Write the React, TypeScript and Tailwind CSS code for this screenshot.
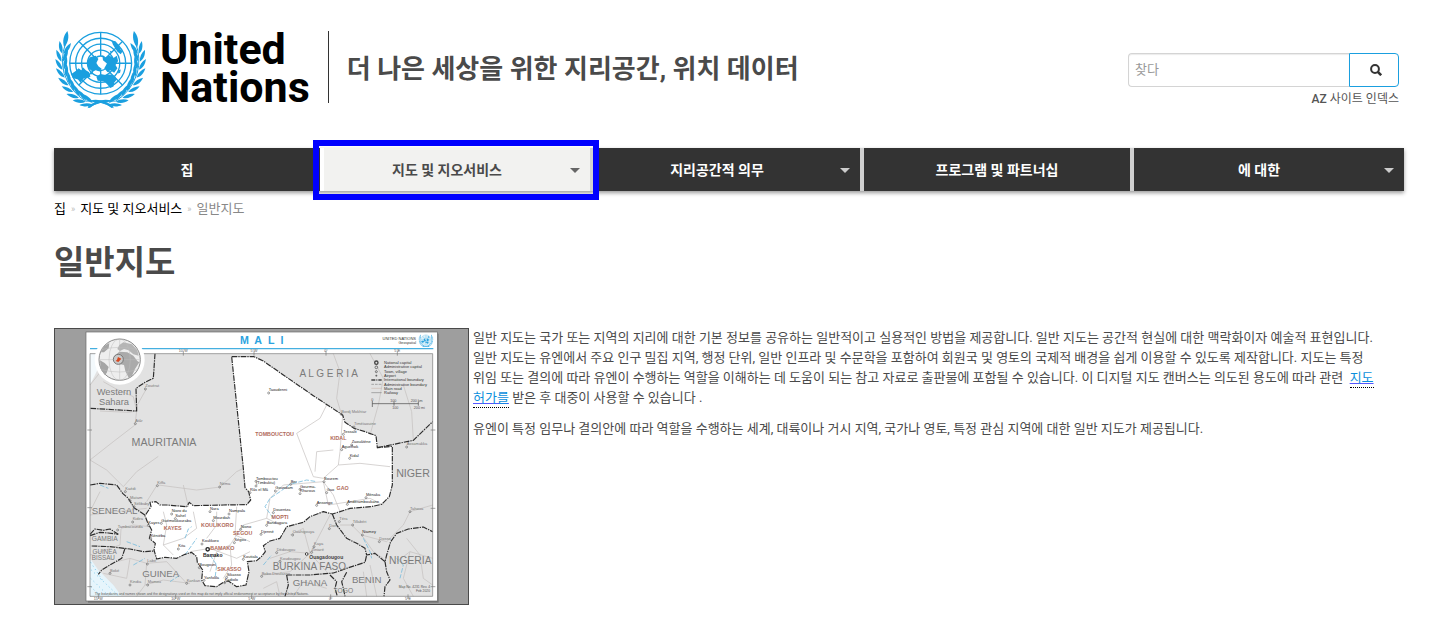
const NAV_ITEMS = [
  { label: '집', menu: false, active: false },
  { label: '지도 및 지오서비스', menu: true, active: true },
  { label: '지리공간적 의무', menu: true, active: false },
  { label: '프로그램 및 파트너십', menu: false, active: false },
  { label: '에 대한', menu: true, active: false },
];

// x, y and heading of each pair of leaves along the left branch
const LEAVES = [
  [128, 238, -74],
  [108, 230, -64],
  [88, 218, -54],
  [71, 201, -44],
  [57, 181, -34],
  [46, 158, -24],
  [39, 134, -14],
  [36, 110, -4],
  [38, 86, 8],
];

function Wreath() {
  return (
    <g>
      <path d="M192 250 Q150 226 108 230 Q62 204 42 146 Q30 100 46 56" fill="none" stroke="currentColor" strokeWidth="3" />
      <path d="M186 251 Q164 232 134 234 L120 228 Q160 220 192 247Z" />
      {LEAVES.map(([x, y, a]) => (
        <g key={y} transform={`translate(${x} ${y}) rotate(${a})`}>
          <path d="M-2 0C-14 -9 -17 -22 -15 -37C-5 -27 0 -14 -2 0Z" />
          <path d="M3 0C15 -9 20 -20 20 -36C9 -28 1 -14 3 0Z" />
        </g>
      ))}
      <path d="M42 66C36 48 40 30 52 17C58 34 54 54 42 66Z" />
    </g>
  );
}

function Emblem(props: React.SVGProps<SVGSVGElement>) {
  return (
    <svg viewBox="12 14 284 240" fill="currentColor" aria-hidden="true" {...props}>
      <Wreath />
      <g transform="translate(306 0) scale(-1 1)">
        <Wreath />
      </g>
      <circle cx="153" cy="115" r="100" fill="#fff" />
      <g fill="none" stroke="currentColor" strokeWidth="4">
        <circle cx="153" cy="115" r="94" />
        <circle cx="153" cy="115" r="76" />
        <circle cx="153" cy="115" r="58" />
        <circle cx="153" cy="115" r="40" />
        <circle cx="153" cy="115" r="22" />
        <path d="M153 21V93M153 137V209M59 115H131M175 115H247M87 49L137 99M169 131L219 181M219 49L169 99M137 131L87 181" />
      </g>
      <path d="M114 104 122 96 138 92 146 102 140 114 146 124 156 132 150 140 138 136 128 140 116 130 110 116Z" />
      <path d="M158 90 166 99 178 91 192 99 202 92 206 108 198 120 204 130 194 144 182 136 174 142 164 130 172 116 160 106Z" />
      <path d="M64 148 78 138 86 130 94 136 100 128 108 136 118 142 122 156 110 158 100 162 92 174 84 164 68 160Z" />
      <path d="M140 156 152 148 168 151 182 149 196 154 202 164 194 174 192 186 182 190 172 178 162 170 144 168Z" />
      <path d="M186 46 198 48 208 60 214 74 220 78 214 88 204 80 196 68 190 58Z" />
      <path d="M206 136 214 134 212 144 206 146ZM120 140 130 142 126 150ZM180 76 188 80 184 84Z" />
    </svg>
  );
}

const MALI =
  'M545 95H612L640 108 700 150 790 212 878 270 885 292 912 310 945 320 978 332 982 368 1027 364V480L1018 515 995 538 963 545 900 550 870 560 847 567 820 560 780 575 760 592 710 605 690 640 660 648 640 662 646 680 634 695 620 707 592 710 597 740 588 780 560 785 535 768 520 772 500 785 465 782 455 765 458 735 442 712 440 695 425 682 405 688 380 700 345 697 320 702 312 675 316 655 298 640 305 615 292 590 285 572 303 545 300 532 318 530 330 540 350 540 410 545 418 532 430 542 520 540 590 539 602 525 596 500 585 488 580 430Z';

const BORDERS = [
  'M315 86 310 160 285 172 258 190 260 258 120 250',
  'M120 480 150 475 200 480 218 505 235 520 252 548 285 570',
  'M120 628 135 612 160 616 180 612 205 628M120 632 150 622 175 624 205 628',
  'M125 663 180 665 240 672 280 680 312 678',
  'M225 670 215 700 180 720 155 735 145 748',
  'M710 750 780 750 850 744 890 730 945 712 950 690',
  'M847 567 860 600 890 640 920 655 945 670 950 690 975 685 1005 710 1010 690 1022 650 1040 625 1075 612 1120 606 1148 620',
  'M1005 710 1010 740 1020 765 1005 785 1002 814',
  'M710 750 715 780 705 814',
  'M840 750 860 770 855 790 862 814M890 742 875 770 880 790 885 814',
  'M982 368 1090 346 1148 290',
];

const ROADS = [
  'M120 180 160 130M160 170 195 190 250 215 260 258 235 262 150 258M290 190 262 240 255 300 190 350 120 405M120 405 170 435 220 485 260 440 325 394',
  'M120 570 200 560 290 550M150 500 120 560M213 610 250 600 300 605M120 690 210 660 213 612',
  'M325 480 440 495 510 486M400 480 415 545M320 482 290 530M510 486 560 440 580 430',
  'M200 710 240 700 290 715 350 710 410 775M290 715 285 780 260 814M240 700 230 760 160 745M285 780 340 765 420 775',
  'M850 86 870 140 860 220 875 270M960 86 1000 160 985 240 960 330M1090 346 1085 260 1060 180',
  'M878 270 870 380 865 420 820 460 790 455 740 325 810 280 830 240',
  'M865 420 930 415 1020 425M795 440 800 380 850 375',
  'M700 480 760 475 820 470 850 510 870 560M820 470 835 540 900 530 960 520 1000 540',
  'M700 480 660 520 650 580 690 600M650 580 580 600 540 660 500 680 480 740',
  'M340 560 350 600 340 660 400 640 440 610 430 560M340 660 370 690M420 680 480 670 560 700 600 680',
  'M500 560 500 600 470 640M560 545 555 630 600 650M540 660 545 720 520 760',
  'M660 700 720 680 780 685 840 570M780 685 760 610 720 630M780 685 830 740M640 750 720 740 780 685',
  'M870 600 905 600 935 630 1010 650 1060 600 1080 560 1148 540M935 630 970 680 1000 700',
  'M1040 710 1080 680 1148 700M1080 680 1060 760 1090 814M940 740 950 814M960 720 980 814',
  'M730 814 760 770 830 790M640 790 680 770 690 814M1070 640 1110 690 1120 760 1148 780',
];

const RIVERS = [
  'M405 640 415 612 425 605M405 690 440 640M480 690 500 720 495 760',
  'M670 580 645 545 660 520 690 500 720 478 770 465 800 470',
  'M940 640 960 680 965 700M230 650 270 665M360 770 390 750M150 480 175 490M250 720 285 700M1040 700 1060 720 1050 760M640 720 665 690',
];

const COUNTRIES: [string, number, number, number][] = [
  ['Western', 192, 209, 28],
  ['Sahara', 192, 240, 28],
  ['MAURITANIA', 342, 364, 32],
  ['A L G E R I A', 836, 157, 30],
  ['SENEGAL', 194, 568, 29],
  ['GAMBIA', 164, 648, 20],
  ['GUINEA', 164, 687, 19],
  ['BISSAU', 160, 706, 19],
  ['GUINEA', 332, 755, 29],
  ['NIGER', 1089, 455, 32],
  ['NIGERIA', 1081, 717, 31],
  ['BURKINA FASO', 778, 735, 30],
  ['GHANA', 780, 784, 29],
  ['BENIN', 950, 774, 29],
  ['TOGO', 880, 804, 20],
];

const REGIONS: [string, number, number][] = [
  ['TOMBOUCTOU', 674, 334],
  ['KIDAL', 865, 346],
  ['GAO', 878, 495],
  ['MOPTI', 690, 581],
  ['KAYES', 368, 614],
  ['KOULIKORO', 502, 606],
  ['SEGOU', 578, 629],
  ['BAMAKO', 517, 676],
  ['SIKASSO', 538, 737],
];

const TOWNS: [string, number, number, boolean][] = [
  ['Zouérat', 286, 192, false],
  ['Atâr', 256, 296, false],
  ['Kiffa', 322, 482, false],
  ['Néma', 509, 486, false],
  ['Kaédi', 226, 500, false],
  ['Matam', 240, 527, false],
  ['Sélibaby', 252, 545, false],
  ['Kidira', 248, 591, false],
  ['Tambacounda', 203, 615, false],
  ['Kayes', 295, 601, true],
  ['Kéniéba', 302, 640, true],
  ['Nioro du', 365, 567, true],
  ['Sahel', 376, 581, true],
  ['Guémoukouraba', 334, 595, true],
  ['Kita', 385, 672, true],
  ['Nara', 480, 560, true],
  ['Mourdiah', 490, 587, true],
  ['Nampala', 537, 567, true],
  ['Niono', 572, 613, true],
  ['Ségou', 553, 653, true],
  ['Koulikoro', 456, 657, true],
  ['Bougouni', 448, 728, true],
  ['Sikasso', 530, 757, true],
  ['Koutiala', 580, 703, true],
  ['Yanfolila', 462, 766, true],
  ['Kadiolo', 524, 773, true],
  ['Taoudenni', 656, 204, true],
  ['Tessalit', 880, 328, true],
  ['Bordj Mokhtar', 874, 268, false],
  ['Timéïaouine', 912, 306, false],
  ['Zaouâtène', 905, 360, true],
  ['Aguelhok', 875, 374, true],
  ['Kidal', 899, 400, true],
  ['Assamakka', 1070, 366, false],
  ['Tombouctou', 618, 469, true],
  ['(Timbuktu)', 618, 483, true],
  ['Goundam', 676, 498, true],
  ['Râs el Mâ', 600, 503, true],
  ['Ber', 722, 478, true],
  ['Gourma-', 750, 493, true],
  ['Rharous', 750, 506, true],
  ['Bourem', 822, 470, true],
  ['Gao', 830, 503, true],
  ['Ansongo', 800, 541, true],
  ['Ménaka', 948, 518, true],
  ['Andéramboukane', 892, 538, true],
  ['Douentza', 670, 563, true],
  ['Bandiagara', 650, 601, true],
  ['Djenné', 633, 628, true],
  ['Ouahigouya', 728, 630, false],
  ['Dédougou', 680, 683, false],
  ['Koudougou', 690, 709, false],
  ['Bobo-Dioulasso', 635, 754, false],
  ['Kaya', 792, 665, false],
  ['Ziniaré', 785, 682, false],
  ['Dori', 838, 611, false],
  ['Téra', 868, 590, false],
  ['Tillabéri', 908, 600, false],
  ['Niamey', 937, 630, true],
  ['Dosso', 988, 650, false],
  ['Tahoua', 1080, 560, false],
  ['Mamou', 293, 780, false],
  ['Kindia', 240, 780, false],
  ['Labé', 292, 717, false],
  ['Boké', 180, 745, false],
  ['Kankan', 410, 775, false],
];

const LEGEND = [
  'National capital',
  'Administrative capital',
  'Town, village',
  'Airport',
  'International boundary',
  'Administrative boundary',
  'Main road',
  'Railway',
];

function MaliMap() {
  return (
    <svg viewBox="15 12 1239 825" className="block h-auto w-full font-['Liberation_Sans',Arial,sans-serif]" role="img" aria-label="Mali">
      <rect x="15" y="12" width="1239" height="825" fill="#9e9e9e" />
      <rect x="114" y="26" width="1052" height="807" fill="#777" />
      <rect x="108" y="21" width="1054" height="807" fill="#fff" stroke="#686868" strokeWidth="2" />
      <rect x="120" y="86" width="1028" height="728" fill="#e2e2e2" />
      <path d="M120 86H160L145 130 120 180Z" fill="#f3f9fc" />
      <path d="M120 700 145 735 165 755 190 780 215 814H120Z" fill="#e6f5fc" />
      <path d="M124 735 205 812M122 760 175 812M122 785 150 812M122 712 160 770" stroke="#7cc8ea" strokeWidth="3" strokeDasharray="3 9" />
      <path d={MALI} fill="#fff" />
      <g fill="none" stroke="#c3bebc" strokeWidth="2">
        {ROADS.map((d) => <path key={d} d={d} />)}
      </g>
      <g fill="none" stroke="#79bddd" strokeWidth="2.5" strokeDasharray="14 5">
        {RIVERS.map((d) => <path key={d} d={d} />)}
      </g>
      <g fill="none" stroke="#2c2c2c" strokeWidth="3.5" strokeDasharray="17 3 4 3" strokeLinejoin="round">
        <path d={MALI} />
        {BORDERS.map((d) => <path key={d} d={d} />)}
      </g>
      <path d="M120 86H1148V814H120ZM400 78V92M612 78V92M828 78V92M1042 78V92M145 808V822M377 808V822M605 808V822M842 808V822M1074 808V822M112 315H126M112 548H126M112 785H126M1142 315H1156M1142 550H1156M1142 785H1156" fill="none" stroke="#777" strokeWidth="2" />
      <path d="M120 71H1150" stroke="#45afe0" strokeWidth="4" />
      <text x="635" y="57" textAnchor="middle" fontSize="32" fontWeight="bold" fill="#2ca3df">M&nbsp; A&nbsp; L&nbsp; I</text>
      <g fontSize="11" fill="#333" textAnchor="end">
        <text x="1098" y="44" fontSize="12">UNITED NATIONS</text>
        <text x="1098" y="57">Geospatial</text>
      </g>
      <Emblem x="1105" y="28" width="46" height="39" className="text-[#2ca3df]" />

      <g textAnchor="middle" fill="#7b7b7b">
        {COUNTRIES.map(([name, x, y, size]) => (
          <text key={`${name}${y}`} x={x} y={y} fontSize={size}>{name}</text>
        ))}
      </g>
      <g textAnchor="middle" fill="#b06a5a" fontSize="16" fontWeight="bold">
        {REGIONS.map(([name, x, y]) => <text key={name} x={x} y={y}>{name}</text>)}
      </g>
      <g fontSize="12">
        {TOWNS.map(([name, x, y, inner]) => (
          <g key={name} fill={inner ? '#222' : '#777'}>
            <circle cx={x} cy={y} r="3" fill="none" stroke="currentColor" strokeWidth="2" className="text-[#6b6b6b]" />
            <text x={x} y={y - 5}>{name}</text>
          </g>
        ))}
      </g>
      <g fill="#222" fontWeight="bold" fontSize="15">
        <circle cx="473" cy="673" r="5" fill="#fff" stroke="#222" strokeWidth="4" />
        <text x="459" y="696">Bamako</text>
        <circle cx="770" cy="687" r="4" fill="#fff" stroke="#444" strokeWidth="3" />
        <text x="778" y="701" fill="#444">Ouagadougou</text>
      </g>

      <g fontSize="12" fill="#333">
        {LEGEND.map((label, i) => <text key={label} x="1002" y={117 + i * 13}>{label}</text>)}
      </g>
      <g fill="none" stroke="#444" strokeWidth="2">
        <circle cx="979" cy="113" r="5" strokeWidth="4" />
        <circle cx="979" cy="127" r="4" />
        <circle cx="979" cy="140" r="3" />
        <path d="M976 152H982M979 149V155" />
        <path d="M964 165H995" strokeWidth="4" strokeDasharray="12 3 3 3" />
        <path d="M964 178H995" stroke="#888" strokeDasharray="8 3" />
        <path d="M964 190H995" stroke="#cbb9b0" />
        <path d="M964 203H995" stroke="#888" />
        <path d="M967 236H1105M967 228V246M1032 230V242M1105 230V242" />
      </g>
      <g fontSize="11" fill="#555" textAnchor="middle">
        <text x="1030" y="231">100</text>
        <text x="1100" y="231">200 km</text>
        <text x="967" y="227">0</text>
        <text x="1036" y="251">100</text>
        <text x="1108" y="251">200 mi</text>
        <text x="400" y="82">10°W</text>
        <text x="612" y="82">5°W</text>
        <text x="828" y="82">0°</text>
        <text x="1042" y="82">5°E</text>
        <text x="145" y="826">15°W</text>
        <text x="377" y="826">10°W</text>
        <text x="605" y="826">5°W</text>
        <text x="842" y="826">0°</text>
        <text x="1074" y="826">5°E</text>
      </g>
      <g fontSize="10" fill="#555">
        <text x="134" y="811">The boundaries and names shown and the designations used on this map do not imply official endorsement or acceptance by the United Nations.</text>
        <text x="1140" y="789" textAnchor="end">Map No. 4231 Rev. 4</text>
        <text x="1140" y="800" textAnchor="end">Feb 2020</text>
      </g>

      <circle cx="209" cy="104" r="75" fill="#fff" />
      <circle cx="209" cy="104" r="62" fill="#eee" stroke="#8a8a8a" strokeWidth="3" />
      <path d="M193 93 208 80 232 82 250 92 262 108 268 112 255 132 246 152 236 158 226 138 222 120 204 116 194 108Z" fill="#aaa" />
      <path d="M202 72 208 60 220 52 246 58 262 76 266 92 250 88 236 76 222 72 210 78Z" fill="#b5b5b5" />
      <path d="M150 106 164 114 176 126 170 144 164 150 152 132ZM152 82 162 64 178 54 176 70 162 82Z" fill="#a5a5a5" />
      <g fill="none" stroke="#bcbcbc" strokeWidth="1.5">
        <path d="M147 104H271M154 74Q209 60 264 74M154 134Q209 148 264 134M209 42V166" />
        <ellipse cx="209" cy="104" rx="32" ry="62" />
      </g>
      <circle cx="205" cy="103" r="15" fill="#c9c9c9" stroke="#777" strokeWidth="3" />
      <path d="M204 96 214 101 210 106 205 111 197 108 201 104Z" fill="#d8481f" />
    </svg>
  );
}

export default function App() {
  return (
    <div className="min-h-screen bg-white pr-[43px] pl-[54px] font-[Roboto,'Noto_Sans_CJK_KR',sans-serif] text-[#4a4a4a]">
      <header className="flex items-start justify-between pt-[30px]">
        <div className="flex items-start">
          <a href="#" className="flex items-start text-black">
            <Emblem className="h-[79px] w-[94px] text-[#1a9fdf]" />
            <span className="ml-3 text-[43px] leading-[38px] font-bold">
              United
              <br />
              Nations
            </span>
          </a>
          <div className="mt-px ml-[18px] flex h-[72px] items-center border-l border-[#333] pl-[18px]">
            <p className="pt-1 text-[26px] leading-8 font-bold">더 나은 세상을 위한 지리공간, 위치 데이터</p>
          </div>
        </div>
        <div className="mt-[23px] mr-[5px] w-[271px]">
          <form className="flex h-[34px]" onSubmit={(e) => e.preventDefault()}>
            <input
              type="search"
              aria-label="찾다"
              placeholder="찾다"
              className="min-w-0 flex-1 rounded-l border border-r-0 border-[#d4d4d4] px-1.5 text-[13px] shadow-[inset_0_1px_1px_rgba(0,0,0,0.08)] outline-none placeholder:text-[#999]"
            />
            <button type="submit" aria-label="검색" className="flex w-[50px] items-center justify-center rounded-r border border-[#1a9fdf] text-[#333]">
              <svg viewBox="0 0 12 12" className="ml-1 size-3" fill="none" stroke="currentColor" strokeWidth="2">
                <circle cx="5" cy="5" r="3.9" />
                <path d="M7.8 7.8 11.2 11.2" strokeWidth="2.6" />
              </svg>
            </button>
          </form>
          <a href="#" className="mt-1 block text-right text-xs leading-4 text-[#555]">
            <span className="font-medium">AZ</span> 사이트 인덱스
          </a>
        </div>
      </header>

      <nav className="relative mt-[39px] grid h-[43px] grid-cols-5 bg-[#333] shadow-[0_2px_4px_rgba(0,0,0,0.4)]">
        {NAV_ITEMS.map((item, i) => (
          <a
            key={item.label}
            href="#"
            className={`relative flex items-center justify-center text-sm font-bold ${
              item.active ? 'bg-[#f2f2f0] text-[#4a4a4a]' : 'text-white'
            } ${i === 4 ? '' : i === 0 ? 'border-r-4 border-white' : 'border-r-4 border-[#d0d0d0]'} ${item.menu ? 'pr-5' : ''}`}
          >
            {item.label}
            {item.menu && (
              <svg viewBox="0 0 10 5" className={`absolute top-5 right-2.5 h-[5px] w-2.5 ${item.active ? 'text-[#666]' : 'text-[#ccc]'}`} fill="currentColor">
                <path d="M0 0H10L5 5Z" />
              </svg>
            )}
            {item.active && <span className="pointer-events-none absolute -top-2 -right-[9px] -bottom-[9px] -left-[11px] z-10 border-[6px] border-[#0000ff]" />}
          </a>
        ))}
      </nav>

      <div className="mt-2 flex items-center gap-[5px] text-[13px] leading-5">
        <a href="#" className="text-black">집</a>
        <span className="text-[9px] text-[#bbb]">»</span>
        <a href="#" className="text-black">지도 및 지오서비스</a>
        <span className="text-[9px] text-[#bbb]">»</span>
        <span className="text-[#888]">일반지도</span>
      </div>

      <h1 className="mt-6 text-[33px] leading-10 font-bold">일반지도</h1>

      <main className="mt-[45px] flex items-start gap-1 pb-5">
        <div className="w-[415px] shrink-0 border border-[#4a4a4a]">
          <MaliMap />
        </div>
        <div className="min-w-0 flex-1 text-[13px] leading-5">
          <p>
            일반 지도는 국가 또는 지역의 지리에 대한 기본 정보를 공유하는 일반적이고 실용적인 방법을 제공합니다. 일반 지도는 공간적 현실에 대한 맥락화이자 예술적 표현입니다.
            <br />
            일반 지도는 유엔에서 주요 인구 밀집 지역, 행정 단위, 일반 인프라 및 수문학을 포함하여 회원국 및 영토의 국제적 배경을 쉽게 이용할 수 있도록 제작합니다. 지도는 특정
            <br />
            위임 또는 결의에 따라 유엔이 수행하는 역할을 이해하는 데 도움이 되는 참고 자료로 출판물에 포함될 수 있습니다. 이 디지털 지도 캔버스는 의도된 용도에 따라 관련 &nbsp;
            <a href="#" className="border-b border-dotted border-black pb-0.5 text-[#0b8fdc] underline decoration-[#5555ff] underline-offset-1">
              지도
              <br />
              허가를
            </a>{' '}
            받은 후 대중이 사용할 수 있습니다 .
          </p>
          <p className="mt-[11px]">
            유엔이 특정 임무나 결의안에 따라 역할을 수행하는 세계, 대륙이나 거시 지역, 국가나 영토, 특정 관심 지역에 대한 일반 지도가 제공됩니다.
          </p>
        </div>
      </main>
    </div>
  );
}
